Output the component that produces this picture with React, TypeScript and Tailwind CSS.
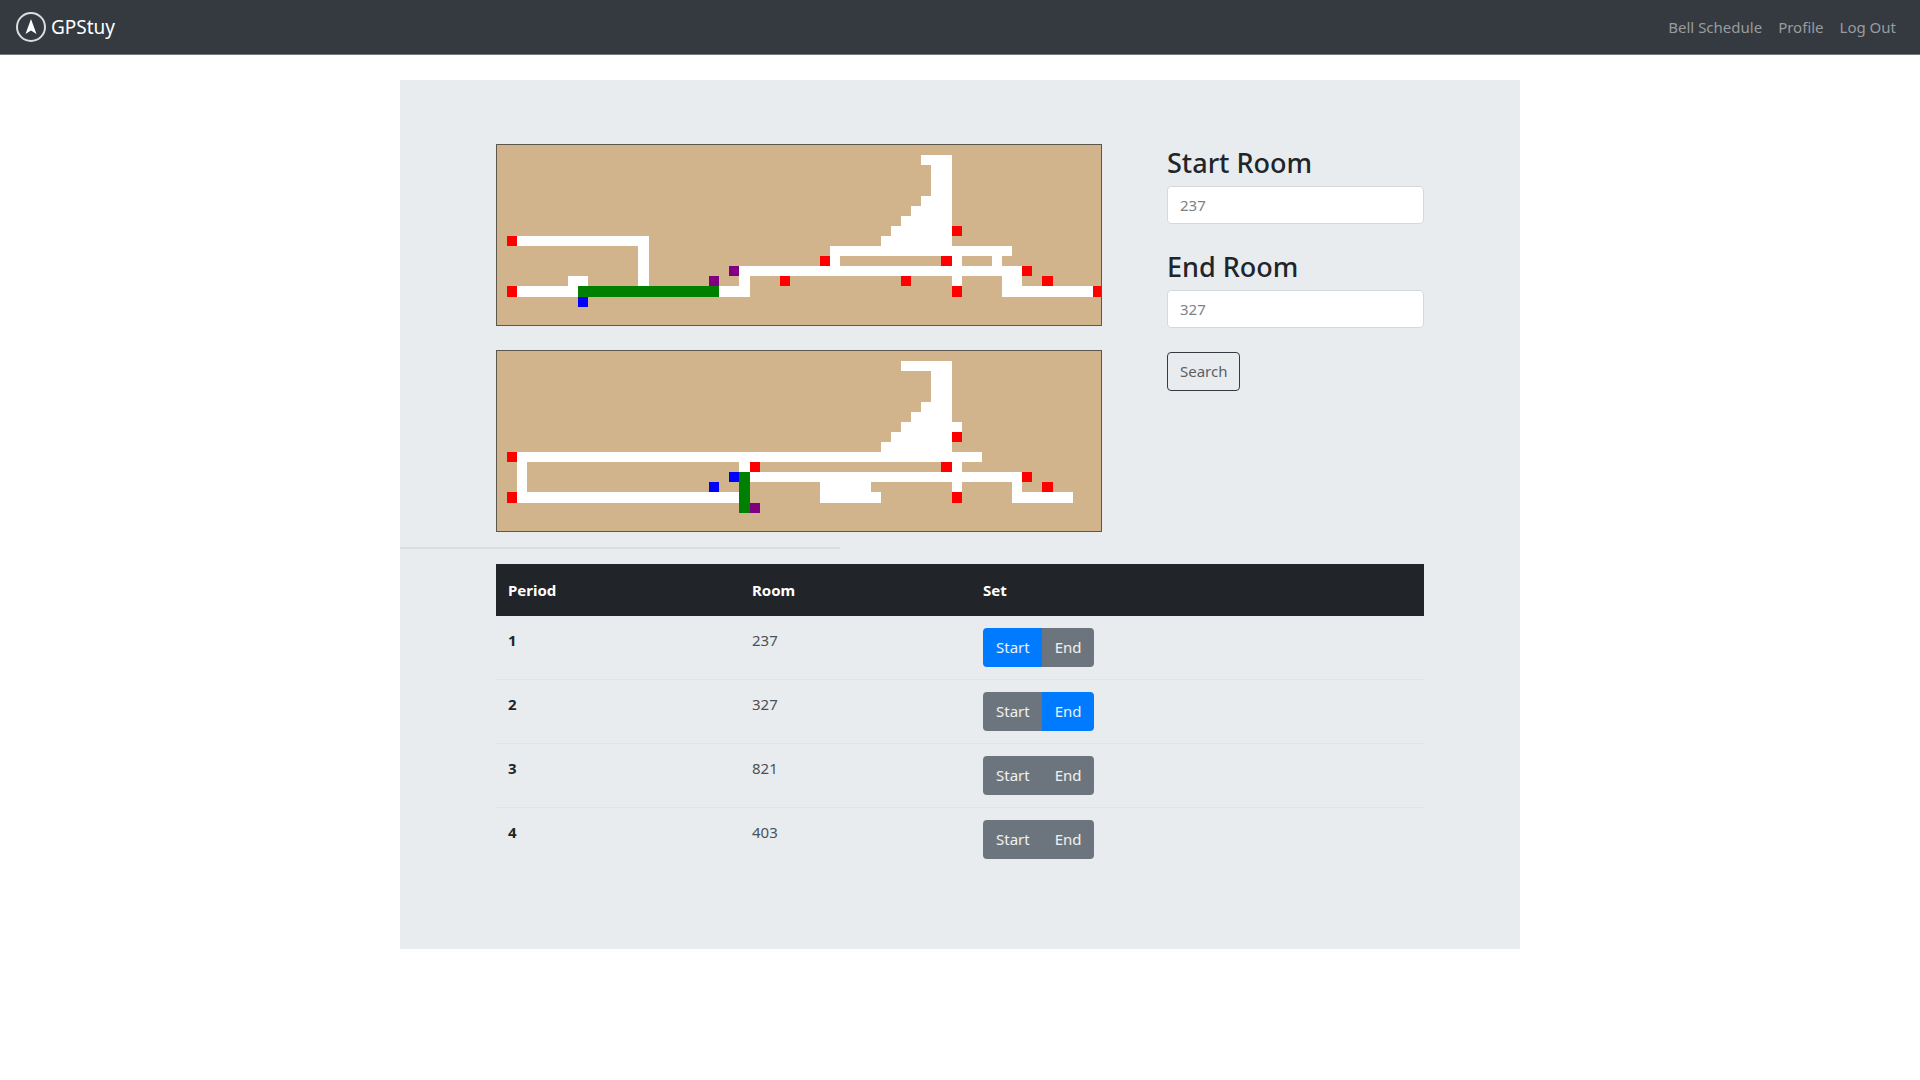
import { useState } from "react";

type Rect = [col: number, row: number, cols: number, rows: number];

interface FloorPlan {
  name: string;
  halls: Rect[];
  stairs: Rect[];
  route: Rect[];
  entries: Rect[];
  exits: Rect[];
}

const secondFloor: FloorPlan = {
  name: "Start floor",
  halls: [
    [2, 9, 13, 1], [14, 10, 1, 4], [2, 14, 6, 1], [7, 13, 2, 1],
    [22, 14, 3, 1], [24, 12, 1, 2], [24, 12, 28, 1], [33, 10, 18, 1],
    [33, 11, 1, 1], [45, 11, 1, 3], [49, 11, 1, 1], [50, 12, 2, 3], [52, 14, 7, 1],
    [42, 1, 3, 1], [43, 2, 2, 3], [42, 5, 3, 1], [41, 6, 4, 1],
    [40, 7, 5, 1], [39, 8, 6, 1], [38, 9, 7, 1],
  ],
  stairs: [
    [1, 9, 1, 1], [1, 14, 1, 1], [28, 13, 1, 1], [32, 11, 1, 1], [40, 13, 1, 1],
    [44, 11, 1, 1], [45, 8, 1, 1], [45, 14, 1, 1], [52, 12, 1, 1], [54, 13, 1, 1],
    [59, 14, 1, 1],
  ],
  route: [[8, 14, 14, 1]],
  entries: [[8, 15, 1, 1]],
  exits: [[21, 13, 1, 1], [23, 12, 1, 1]],
};

const thirdFloor: FloorPlan = {
  name: "End floor",
  halls: [
    [2, 10, 46, 1], [2, 11, 1, 3], [2, 14, 22, 1], [24, 11, 1, 1],
    [25, 12, 27, 1], [32, 13, 5, 1], [32, 14, 6, 1], [45, 11, 1, 3],
    [51, 13, 1, 2], [52, 14, 5, 1],
    [40, 1, 5, 1], [43, 2, 2, 3], [42, 5, 3, 1], [41, 6, 4, 1],
    [40, 7, 6, 1], [39, 8, 6, 1], [38, 9, 7, 1],
  ],
  stairs: [
    [1, 10, 1, 1], [1, 14, 1, 1], [25, 11, 1, 1], [44, 11, 1, 1],
    [45, 8, 1, 1], [45, 14, 1, 1], [52, 12, 1, 1], [54, 13, 1, 1],
  ],
  route: [[24, 12, 1, 4]],
  entries: [[21, 13, 1, 1], [23, 12, 1, 1]],
  exits: [[25, 15, 1, 1]],
};

function Cells({ rects, fill }: { rects: Rect[]; fill: string }) {
  return (
    <g fill={fill} shapeRendering="crispEdges">
      {rects.map(([c, r, w, h]) => (
        <rect key={`${c}-${r}-${w}-${h}`} x={c * 10} y={r * 10} width={w * 10} height={h * 10} />
      ))}
    </g>
  );
}

function FloorMap({ plan }: { plan: FloorPlan }) {
  return (
    <svg
      viewBox="0 0 598 178"
      role="img"
      aria-label={plan.name}
      className="block w-full border border-[#5c5850] bg-[#d2b48c]"
    >
      <Cells rects={plan.halls} fill="#ffffff" />
      <Cells rects={plan.stairs} fill="#ff0000" />
      <Cells rects={plan.route} fill="#008000" />
      <Cells rects={plan.entries} fill="#0000ff" />
      <Cells rects={plan.exits} fill="#800080" />
    </svg>
  );
}

function Logo() {
  return (
    <svg viewBox="0 0 32 32" className="size-8" aria-hidden="true">
      <circle cx="16" cy="16" r="14" fill="none" stroke="#dcdddf" strokeWidth="2" />
      <path d="M16 8 L21.5 23 L16 19.5 L10.5 23 Z" fill="#ffffff" />
    </svg>
  );
}

function RoomField({ id, label, value }: { id: string; label: string; value: string }) {
  return (
    <div className="mb-6">
      <label htmlFor={id} className="mb-1 block text-[27px] leading-[38px] font-medium">
        {label}
      </label>
      <input
        id={id}
        type="text"
        placeholder={value}
        className="block h-[38px] w-full rounded border border-[#d5d9de] bg-white px-3 text-[15px] placeholder:text-[#7b8289]"
      />
    </div>
  );
}

const periods = [
  { period: 1, room: "237" },
  { period: 2, room: "327" },
  { period: 3, room: "821" },
  { period: 4, room: "403" },
];

const toggleBase = "h-[39px] pl-[13px] pr-3 text-[15px] text-white/90";

export default function App() {
  const [start, setStart] = useState("237");
  const [end, setEnd] = useState("327");

  return (
    <div className="min-h-screen bg-white font-['Noto_Sans',sans-serif] text-base text-[#212529]">
      <nav className="flex h-[55px] items-center justify-between border-b border-[#73777b] bg-[#343a40] pr-6 pl-[15px]">
        <a href="#" className="flex items-center gap-1 text-[19px] text-white">
          <Logo />
          GPStuy
        </a>
        <div className="flex gap-4 text-[15px] text-[#999c9f]">
          <a href="#bell">Bell Schedule</a>
          <a href="#profile">Profile</a>
          <a href="#logout">Log Out</a>
        </div>
      </nav>

      <main className="mx-auto mt-[25px] max-w-[1120px] bg-[#e8ecef] pt-16 pb-[78px]">
        <div className="grid grid-cols-[606fr_257fr] gap-x-[65px] px-24">
          <div className="flex flex-col gap-6">
            <FloorMap plan={secondFloor} />
            <FloorMap plan={thirdFloor} />
          </div>
          <form onSubmit={(e) => e.preventDefault()}>
            <RoomField id="start-room" label="Start Room" value={start} />
            <RoomField id="end-room" label="End Room" value={end} />
            <button
              type="submit"
              className="h-[39px] rounded border border-[#343a40] px-3 text-[15px] text-[#5a5f64]"
            >
              Search
            </button>
          </form>
        </div>

        <hr className="my-[15px] w-[440px] border-t-2 border-[#dadee1]" />

        <div className="px-24">
          <table className="w-full table-fixed text-left text-[15px] leading-6">
            <thead className="bg-[#212529] text-white">
              <tr className="h-[52px]">
                <th scope="col" className="w-[244px] px-3">Period</th>
                <th scope="col" className="w-[231px] px-3">Room</th>
                <th scope="col" className="px-3">Set</th>
              </tr>
            </thead>
            <tbody>
              {periods.map(({ period, room }) => (
                <tr key={period} className="border-t border-[#e1e5e8] align-top first:border-t-0">
                  <th scope="row" className="px-3 py-3">{period}</th>
                  <td className="px-3 py-3 text-[#4d5155]">{room}</td>
                  <td className="px-3 py-3">
                    <div className="inline-flex overflow-hidden rounded align-top">
                      <button
                        type="button"
                        onClick={() => setStart(room)}
                        className={`${toggleBase} ${start === room ? "bg-[#007bff]" : "bg-[#6c757d]"}`}
                      >
                        Start
                      </button>
                      <button
                        type="button"
                        onClick={() => setEnd(room)}
                        className={`${toggleBase} ${end === room ? "bg-[#007bff]" : "bg-[#6c757d]"}`}
                      >
                        End
                      </button>
                    </div>
                  </td>
                </tr>
              ))}
            </tbody>
          </table>
        </div>
      </main>
    </div>
  );
}
